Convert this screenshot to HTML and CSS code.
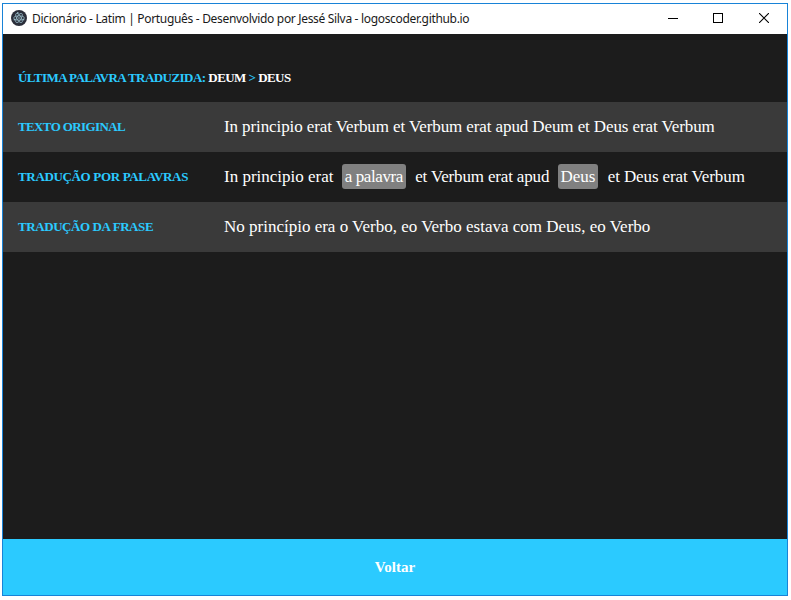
FILE: index.html
```html
<!DOCTYPE html>
<html lang="pt-BR">
<head>
<meta charset="utf-8">
<title>Dicionário - Latim | Português</title>
<link rel="stylesheet" href="styles.css">
</head>
<body>
<div class="window">
  <header class="titlebar">
    <svg class="app-icon" width="16" height="16" viewBox="0 0 16 16">
      <circle cx="8" cy="8" r="8" fill="#2b2e3a"/>
      <g fill="none" stroke="#9fc3cf" stroke-width=".7">
        <ellipse cx="8" cy="8" rx="5.3" ry="2.1"/>
        <ellipse cx="8" cy="8" rx="5.3" ry="2.1" transform="rotate(60 8 8)"/>
        <ellipse cx="8" cy="8" rx="5.3" ry="2.1" transform="rotate(120 8 8)"/>
      </g>
      <g fill="#9fc3cf"><circle cx="8" cy="8" r=".8"/><circle cx="3.4" cy="9.8" r=".8"/><circle cx="12.6" cy="9.8" r=".8"/><circle cx="6.8" cy="2.9" r=".8"/></g>
    </svg>
    <span class="title">Dicionário - Latim | Português - Desenvolvido por Jessé Silva - logoscoder.github.io</span>
    <div class="controls">
      <svg width="10" height="10" viewBox="0 0 10 10" shape-rendering="crispEdges"><path d="M0 5h10v1H0z"/></svg>
      <svg width="10" height="10" viewBox="0 0 10 10" shape-rendering="crispEdges"><path d="M.5.5h9v9h-9z" fill="none" stroke="#000"/></svg>
      <svg width="10" height="10" viewBox="0 0 10 10"><path d="M0 0l10 10M10 0L0 10" fill="none" stroke="#000" stroke-width="1.1"/></svg>
    </div>
  </header>
  <main class="content">
    <p class="last label">ÚLTIMA PALAVRA TRADUZIDA: <b>DEUM</b> &gt; <b>DEUS</b></p>
    <div class="row shaded">
      <span class="label original">TEXTO ORIGINAL</span>
      <span class="text latin">In principio erat Verbum et Verbum erat apud Deum et Deus erat Verbum</span>
    </div>
    <div class="row translated">
      <span class="label words">TRADUÇÃO POR PALAVRAS</span>
      <span class="text">In principio erat <span class="chip tight">a palavra</span> <span class="middle">et Verbum erat apud</span> <span class="chip">Deus</span> <span class="latin">et Deus erat Verbum</span></span>
    </div>
    <div class="row shaded">
      <span class="label phrase">TRADUÇÃO DA FRASE</span>
      <span class="text">No princípio era o Verbo, eo Verbo estava com Deus, eo Verbo</span>
    </div>
  </main>
  <button class="back">Voltar</button>
</div>
</body>
</html>
```
FILE: styles.css
```css
* { box-sizing: border-box; }
body { margin: 0; background: #fff; }
.window {
  display: flex;
  flex-direction: column;
  width: 786px;
  height: 593px;
  margin: 3px 0 0 2px;
  border: 1px solid #1883d7;
  background: #1c1c1c;
}
.titlebar {
  display: flex;
  align-items: center;
  height: 30px;
  padding: 0 18px 0 8px;
  background: #fff;
}
.app-icon { margin-top: -2px; }
.title {
  margin-left: 5px;
  font: 12px/16px "Noto Sans", sans-serif;
  letter-spacing: -0.32px;
  color: #1a1a1a;
  white-space: nowrap;
}
.controls { display: flex; gap: 36px; margin: -2px -1px 0 auto; }
.controls svg { display: block; }
.controls svg:first-child { margin-right: -1px; }
.controls svg:last-child { margin-right: 1px; }
.content { flex: 1; }
.label {
  font: bold 13px/16px "Liberation Serif", serif;
  color: #2bcaff;
  white-space: nowrap;
}
.last { height: 68px; margin: 0; padding: 36px 0 0 15px; letter-spacing: -0.54px; }
.last b { color: #fff; }
.original { letter-spacing: -0.62px; }
.words { letter-spacing: -0.34px; }
.phrase { letter-spacing: -0.42px; }
.row { display: flex; align-items: center; height: 50px; padding-left: 15px; }
.row .label { width: 206px; }
.shaded { background: #3a3a3a; }
.text {
  font: 17px/20px "Liberation Serif", serif;
  color: #fff;
  white-space: nowrap;
}
.latin { letter-spacing: -0.1px; }
.middle { letter-spacing: -0.16px; }
.translated .text { margin-top: -2px; }
.chip {
  display: inline-block;
  height: 25px;
  margin: 0 5px 0 4px;
  padding: 0 3px;
  line-height: 25px;
  border-radius: 3px;
  background: #808080;
}
.tight { letter-spacing: -0.4px; }
.back {
  height: 56px;
  border: 0;
  padding: 0;
  background: #2bcaff;
  color: #fff;
  font: bold 15px/20px "Liberation Serif", serif;
}
```
